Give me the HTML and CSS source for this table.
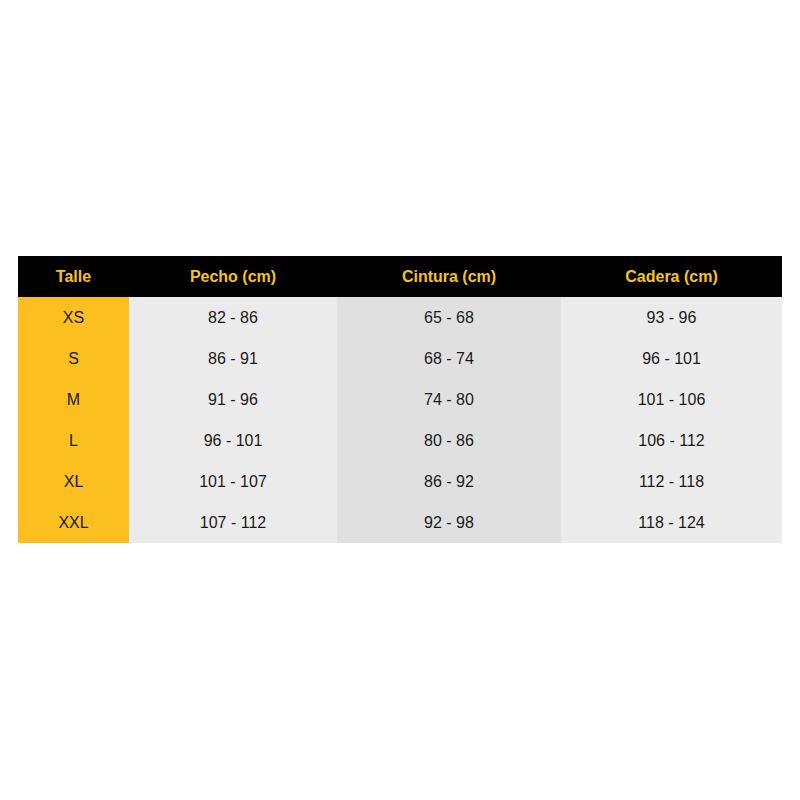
FILE: index.html
```html
<!DOCTYPE html>
<html lang="es">
<head>
<meta charset="utf-8">
<link rel="stylesheet" href="styles.css">
</head>
<body>
<main class="page">
  <div class="chart">
    <div class="cell head">Talle</div>
    <div class="cell head">Pecho (cm)</div>
    <div class="cell head">Cintura (cm)</div>
    <div class="cell head">Cadera (cm)</div>

    <div class="cell size">XS</div><div class="cell light">82 - 86</div><div class="cell dark">65 - 68</div><div class="cell light">93 - 96</div>
    <div class="cell size">S</div><div class="cell light">86 - 91</div><div class="cell dark">68 - 74</div><div class="cell light">96 - 101</div>
    <div class="cell size">M</div><div class="cell light">91 - 96</div><div class="cell dark">74 - 80</div><div class="cell light">101 - 106</div>
    <div class="cell size">L</div><div class="cell light">96 - 101</div><div class="cell dark">80 - 86</div><div class="cell light">106 - 112</div>
    <div class="cell size">XL</div><div class="cell light">101 - 107</div><div class="cell dark">86 - 92</div><div class="cell light">112 - 118</div>
    <div class="cell size">XXL</div><div class="cell light">107 - 112</div><div class="cell dark">92 - 98</div><div class="cell light">118 - 124</div>
  </div>
</main>
</body>
</html>
```

FILE: styles.css
```css
html, body {
  margin: 0;
  background: #ffffff;
}
.page {
  width: 800px;
  height: 800px;
  padding: 256px 0 0 18px;
  box-sizing: border-box;
}
.chart {
  display: grid;
  grid-template-columns: 111px 208px 224px 221px;
  grid-template-rows: 41px repeat(6, 41px);
  width: 764px;
  font-family: "Liberation Sans", Arial, sans-serif;
}
.cell {
  display: flex;
  align-items: center;
  justify-content: center;
  font-size: 16px;
  color: #1a1a1a;
}
.head {
  background: #000000;
  color: #f6c41c;
  font-weight: bold;
  font-size: 16px;
}
.size {
  background: #fbbf20;
}
.light {
  background: #ebebeb;
}
.dark {
  background: #e0e0e0;
}
```
